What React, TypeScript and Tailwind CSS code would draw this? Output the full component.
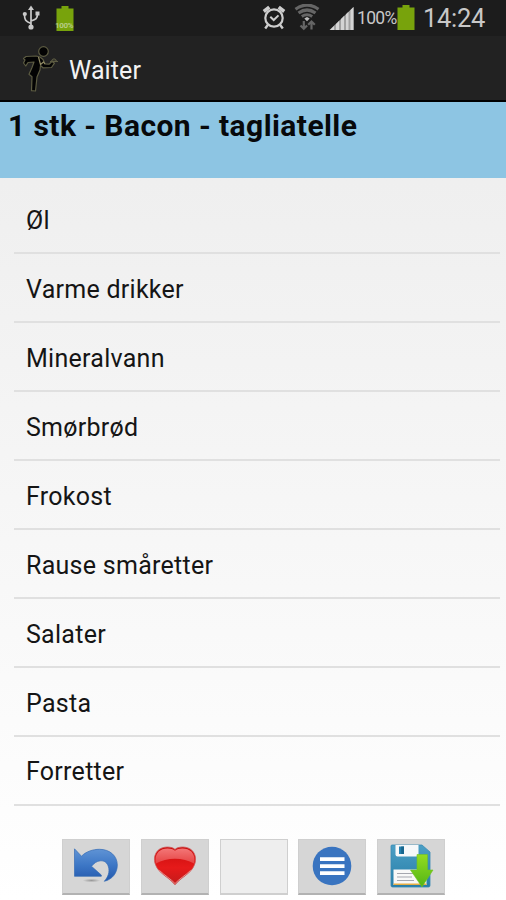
import type { ReactNode } from "react";

const categories = [
    "Øl",
    "Varme drikker",
    "Mineralvann",
    "Smørbrød",
    "Frokost",
    "Rause småretter",
    "Salater",
    "Pasta",
    "Forretter",
];

const UsbIcon = () => (
    <svg width="18" height="26" viewBox="0 0 18 26" fill="none" stroke="#c9c9c9" strokeWidth="1.7">
        <path d="M9 4v18M9 18.500C3.500 16.500 2.500 15 2.500 9.500M9 16c5-1.500 6.500-2.500 6.500-7" />
        <path d="M9 .5l3 4.500H6z" fill="#c9c9c9" stroke="none" />
        <circle cx="9" cy="22" r="2.600" fill="#c9c9c9" stroke="none" />
        <circle cx="2.800" cy="9" r="2.100" fill="#c9c9c9" stroke="none" />
        <path d="M13.500 6.500h4v4h-4z" fill="#c9c9c9" stroke="none" />
    </svg>
);

const BatteryIcon = () => (
    <svg width="18" height="26" viewBox="0 0 18 26">
        <path d="M5.500 0h7v2.500H17.500V25H.5V2.500h5z" fill="#78a30c" />
    </svg>
);

const AlarmIcon = () => (
    <svg width="24" height="25" viewBox="0 0 24 25" fill="none" stroke="#cdcdcd">
        <circle cx="12" cy="13" r="8.700" strokeWidth="2.200" />
        <path d="M8.300 11.800l3.400 3.200 4.800-4.600" strokeWidth="2" />
        <path d="M1.800 6.500l5.500-4.300M22.200 6.500l-5.500-4.300" strokeWidth="3.600" />
        <path d="M5.800 20l-2.600 3.500M18.200 20l2.600 3.500" strokeWidth="2.400" />
    </svg>
);

const WifiIcon = () => (
    <svg width="26" height="27" viewBox="0 0 26 27" fill="none" stroke="#666666">
        <path d="M1.500 5.200Q13-3 24.500 5.200" strokeWidth="3.200" />
        <path d="M4.500 9Q13 3 21.500 9" strokeWidth="3.200" />
        <path d="M7.800 12.500Q13 9 18.200 12.500" strokeWidth="3" />
        <path d="M10.300 14.500L13 13l2.700 1.500-2.700 2.700z" fill="#bcbcbc" stroke="none" />
        <path d="M9.800 17v8M6.500 21.500l3.300 3.300 3.300-3.300M17.500 25.500v-8M14.200 20.800l3.300-3.300 3.300 3.300" strokeWidth="2.200" />
    </svg>
);

const SignalIcon = () => (
    <svg width="25" height="25" viewBox="0 0 25 25">
        <path d="M.5 24L24.500 1v23z" fill="#a0a0a0" />
        <path d="M1 24l4-4v4zM7 24v-6l3-3v9zM12 24V13l3-2.900V24zM17 24V8.200l2.500-2.400V24zM21.500 24V3.900l3-2.900v23z" fill="#d4d4d4" />
    </svg>
);

const WaiterLogo = () => (
    <svg width="38" height="48" viewBox="0 0 38 48" fill="#030303" stroke="#5c5b42" strokeWidth="1.200" strokeLinejoin="round">
        <path d="M1.500 12.500l2.500-2 10-.5 4 1 3 2.500 2 4.500 4 .2 3-2.700 2.500 1.700-3 4.300-8.500.3-2.500-2.300-.5 4.500-3 7-1.500 14-4-.3.5-14-3-2.500 3-6.700 2-5.500-6 .5-2.200 3.500-2.300-3 1.500-3z" />
        <circle cx="21.500" cy="5.500" r="4.800" />
        <path d="M16.500 11l2 7.500 3-2.500 1.500 2" fill="none" stroke="#8f8963" />
        <path d="M28 15.500h8M29.500 15q2.500-4.500 5 0" fill="#34342b" />
    </svg>
);

const UndoIcon = () => (
    <svg width="46" height="38" viewBox="0 0 46 38">
        <defs>
            <linearGradient id="undo" x1="0" y1="0" x2="0" y2="1">
                <stop offset="0" stopColor="#6094d5" />
                <stop offset=".5" stopColor="#3d77c6" />
                <stop offset="1" stopColor="#2358ac" />
            </linearGradient>
            <radialGradient id="undoShade">
                <stop offset="0" stopColor="#999" />
                <stop offset="1" stopColor="#999" stopOpacity="0" />
            </radialGradient>
        </defs>
        <ellipse cx="18.500" cy="33.500" rx="9" ry="1.800" fill="url(#undoShade)" />
        <path
            d="M1.500 1.800L8.500 9.200C13 4.500 20 2.300 26.500 2.300 37 2.300 44.300 9 44.300 18c0 8-5 14.500-13 16.300 4-4.500 5.500-9.500 4.200-14.300-1.200-4.200-4-6.500-8-6.200-3.800.3-6.500 2.500-9 5.500l9.800 8.700v1.300H1.500z"
            fill="url(#undo)"
            stroke="#356bb5"
            strokeWidth=".7"
        />
    </svg>
);

const HeartIcon = () => (
    <svg width="44" height="40" viewBox="0 0 45 41">
        <defs>
            <linearGradient id="heart" x1="0" y1="0" x2="0" y2="1">
                <stop offset="0" stopColor="#c80d0d" />
                <stop offset=".55" stopColor="#e61a1a" />
                <stop offset="1" stopColor="#c21b1b" />
            </linearGradient>
            <linearGradient id="heartShine" x1="0" y1="0" x2="0" y2="1">
                <stop offset="0" stopColor="#f37777" />
                <stop offset="1" stopColor="#e64343" />
            </linearGradient>
        </defs>
        <path
            d="M22.500 3.500C26 0 36 0 40.500 5c5 6 3.500 14-1.500 20-5 5.500-12 9-16.500 14.800C18 34 11 30.500 6 25 1 19-.5 11 4.500 5 9 0 19 0 22.500 3.500z"
            fill="url(#heart)"
            stroke="#ce5757"
            strokeWidth=".8"
        />
        <path
            d="M22.500 4.800C26 1.500 35.500 1.500 39.500 6c3 3.500 3.600 7.500 2.500 12C31 11.500 14 11.500 3 18 1.900 13.500 2.500 9.500 5.500 6c4-4.500 13.500-4.500 17-1.200z"
            fill="url(#heartShine)"
        />
        <path d="M6.500 25c5 5 11.500 8.500 16 13.500C27 33.500 33.500 30 38.500 25" fill="none" stroke="#e7908d" strokeWidth="1" />
    </svg>
);

const MenuIcon = () => (
    <svg width="40" height="40" viewBox="0 0 40 40">
        <circle cx="20" cy="20" r="19.300" fill="#3974c0" />
        <path d="M8 11.200h24.500v3.800H8zM8 18.200h24.500V22H8zM8 25.200h24.500V29H8z" fill="#fff" />
    </svg>
);

const SaveIcon = () => (
    <svg width="46" height="44" viewBox="0 0 46 44">
        <defs>
            <linearGradient id="disk" x1="0" y1="0" x2="0" y2="1">
                <stop offset="0" stopColor="#4b9fc5" />
                <stop offset="1" stopColor="#277da8" />
            </linearGradient>
            <linearGradient id="down" x1="0" y1="0" x2="0" y2="1">
                <stop offset="0" stopColor="#92dc20" />
                <stop offset="1" stopColor="#53b516" />
            </linearGradient>
        </defs>
        <path d="M4 1h30l8 7v33.500q0 1.500-1.500 1.500H4.500Q3 43 3 41.500V2q0-1 1-1z" fill="url(#disk)" stroke="#398cb4" strokeWidth=".8" />
        <path d="M7.500 1h23v9.500q0 2-2 2h-19q-2 0-2-2z" fill="#f5f8fa" />
        <path d="M11 2.500h5V10h-5z" fill="#2380ae" />
        <path d="M13.200 2.500H16V10h-2.800z" fill="#17668e" />
        <path d="M5.500 25.500h33V41h-33z" fill="#f8f8f8" />
        <path d="M5.500 39.500h33V41h-33z" fill="#e5ad43" />
        <path d="M9 29.500h16M9 33h15M9 36.500h17" stroke="#a5a7af" strokeWidth="1" />
        <path d="M29 10.500h10.500V26h5.500L34 43 22.500 26H29z" fill="url(#down)" stroke="#70c321" strokeWidth=".6" />
    </svg>
);

const ToolbarButton = ({ children, label }: { children: ReactNode; label: string }) => (
    <button
        aria-label={label}
        className="flex h-14 w-[68px] items-center justify-center border border-b-2 border-[#cfcfcf] border-b-[#b2b2b2] bg-[#d6d6d6] pb-0.5"
    >
        {children}
    </button>
);

const App = () => {
    return (
        <div className="flex h-[900px] w-[506px] flex-col overflow-hidden bg-linear-to-b from-[#ebebeb] to-white font-['Roboto',sans-serif]">
            {/* Status bar */}
            <div className="flex h-9 shrink-0 items-start bg-[#1c1c1c] text-[#c8c8c8]">
                <div className="mt-[5px] ml-[22px] h-[26px]">
                    <UsbIcon />
                </div>
                <div className="relative mt-[6px] ml-4 h-[26px]">
                    <BatteryIcon />
                    <span className="absolute top-[16px] -left-px text-[8px] leading-[8px] font-bold tracking-[-0.4px] text-[#b6cc85]">
                        100%
                    </span>
                </div>
                <div className="mt-[5px] ml-[188px]">
                    <AlarmIcon />
                </div>
                <div className="mt-[4px] ml-[8px]">
                    <WifiIcon />
                </div>
                <div className="mt-[6px] ml-[9px]">
                    <SignalIcon />
                </div>
                <span className="mt-[8px] ml-[3px] w-[40px] text-[17.5px] leading-5 tracking-[-0.7px] whitespace-nowrap">100%</span>
                <div className="mt-[5px]">
                    <BatteryIcon />
                </div>
                <span className="mt-[4px] ml-[8px] text-[25.5px] leading-7 tracking-[-0.3px]">14:24</span>
            </div>
            {/* Title bar */}
            <div className="flex h-[66px] shrink-0 border-b-2 border-black bg-[#222222]">
                <div className="mt-[10px] ml-[22px]">
                    <WaiterLogo />
                </div>
                <h1 className="mt-[20px] ml-[9px] text-[25px] leading-[30px] tracking-[0.1px] text-[#f3f3f3]">Waiter</h1>
            </div>
            {/* Current order line */}
            <div className="h-[76px] shrink-0 bg-[#8dc5e3] pt-[6px] pl-[8px] text-[30px] leading-9 font-bold tracking-[0.42px] text-[#07090b]">
                1 stk - Bacon - tagliatelle
            </div>
            {/* Categories */}
            <ul className="mt-[7.6px] mr-[6px] ml-[14px]">
                {categories.map((category) => (
                    <li
                        key={category}
                        className="flex h-[68.9px] items-center border-b-2 border-[#e0e0e0] pt-[4px] pl-3 text-[25px] tracking-[0.27px] text-[#151515]"
                    >
                        {category}
                    </li>
                ))}
            </ul>
            {/* Toolbar */}
            <div className="mt-[33.4px] ml-[62px] flex gap-[10.8px]">
                <ToolbarButton label="Undo">
                    <UndoIcon />
                </ToolbarButton>
                <ToolbarButton label="Favourites">
                    <HeartIcon />
                </ToolbarButton>
                <button aria-label="Empty" className="h-14 w-[68px] border border-b-2 border-[#cfcfcf] bg-[#eeeeee]" />
                <ToolbarButton label="Menu">
                    <MenuIcon />
                </ToolbarButton>
                <ToolbarButton label="Save">
                    <SaveIcon />
                </ToolbarButton>
            </div>
        </div>
    );
};

export default App;
